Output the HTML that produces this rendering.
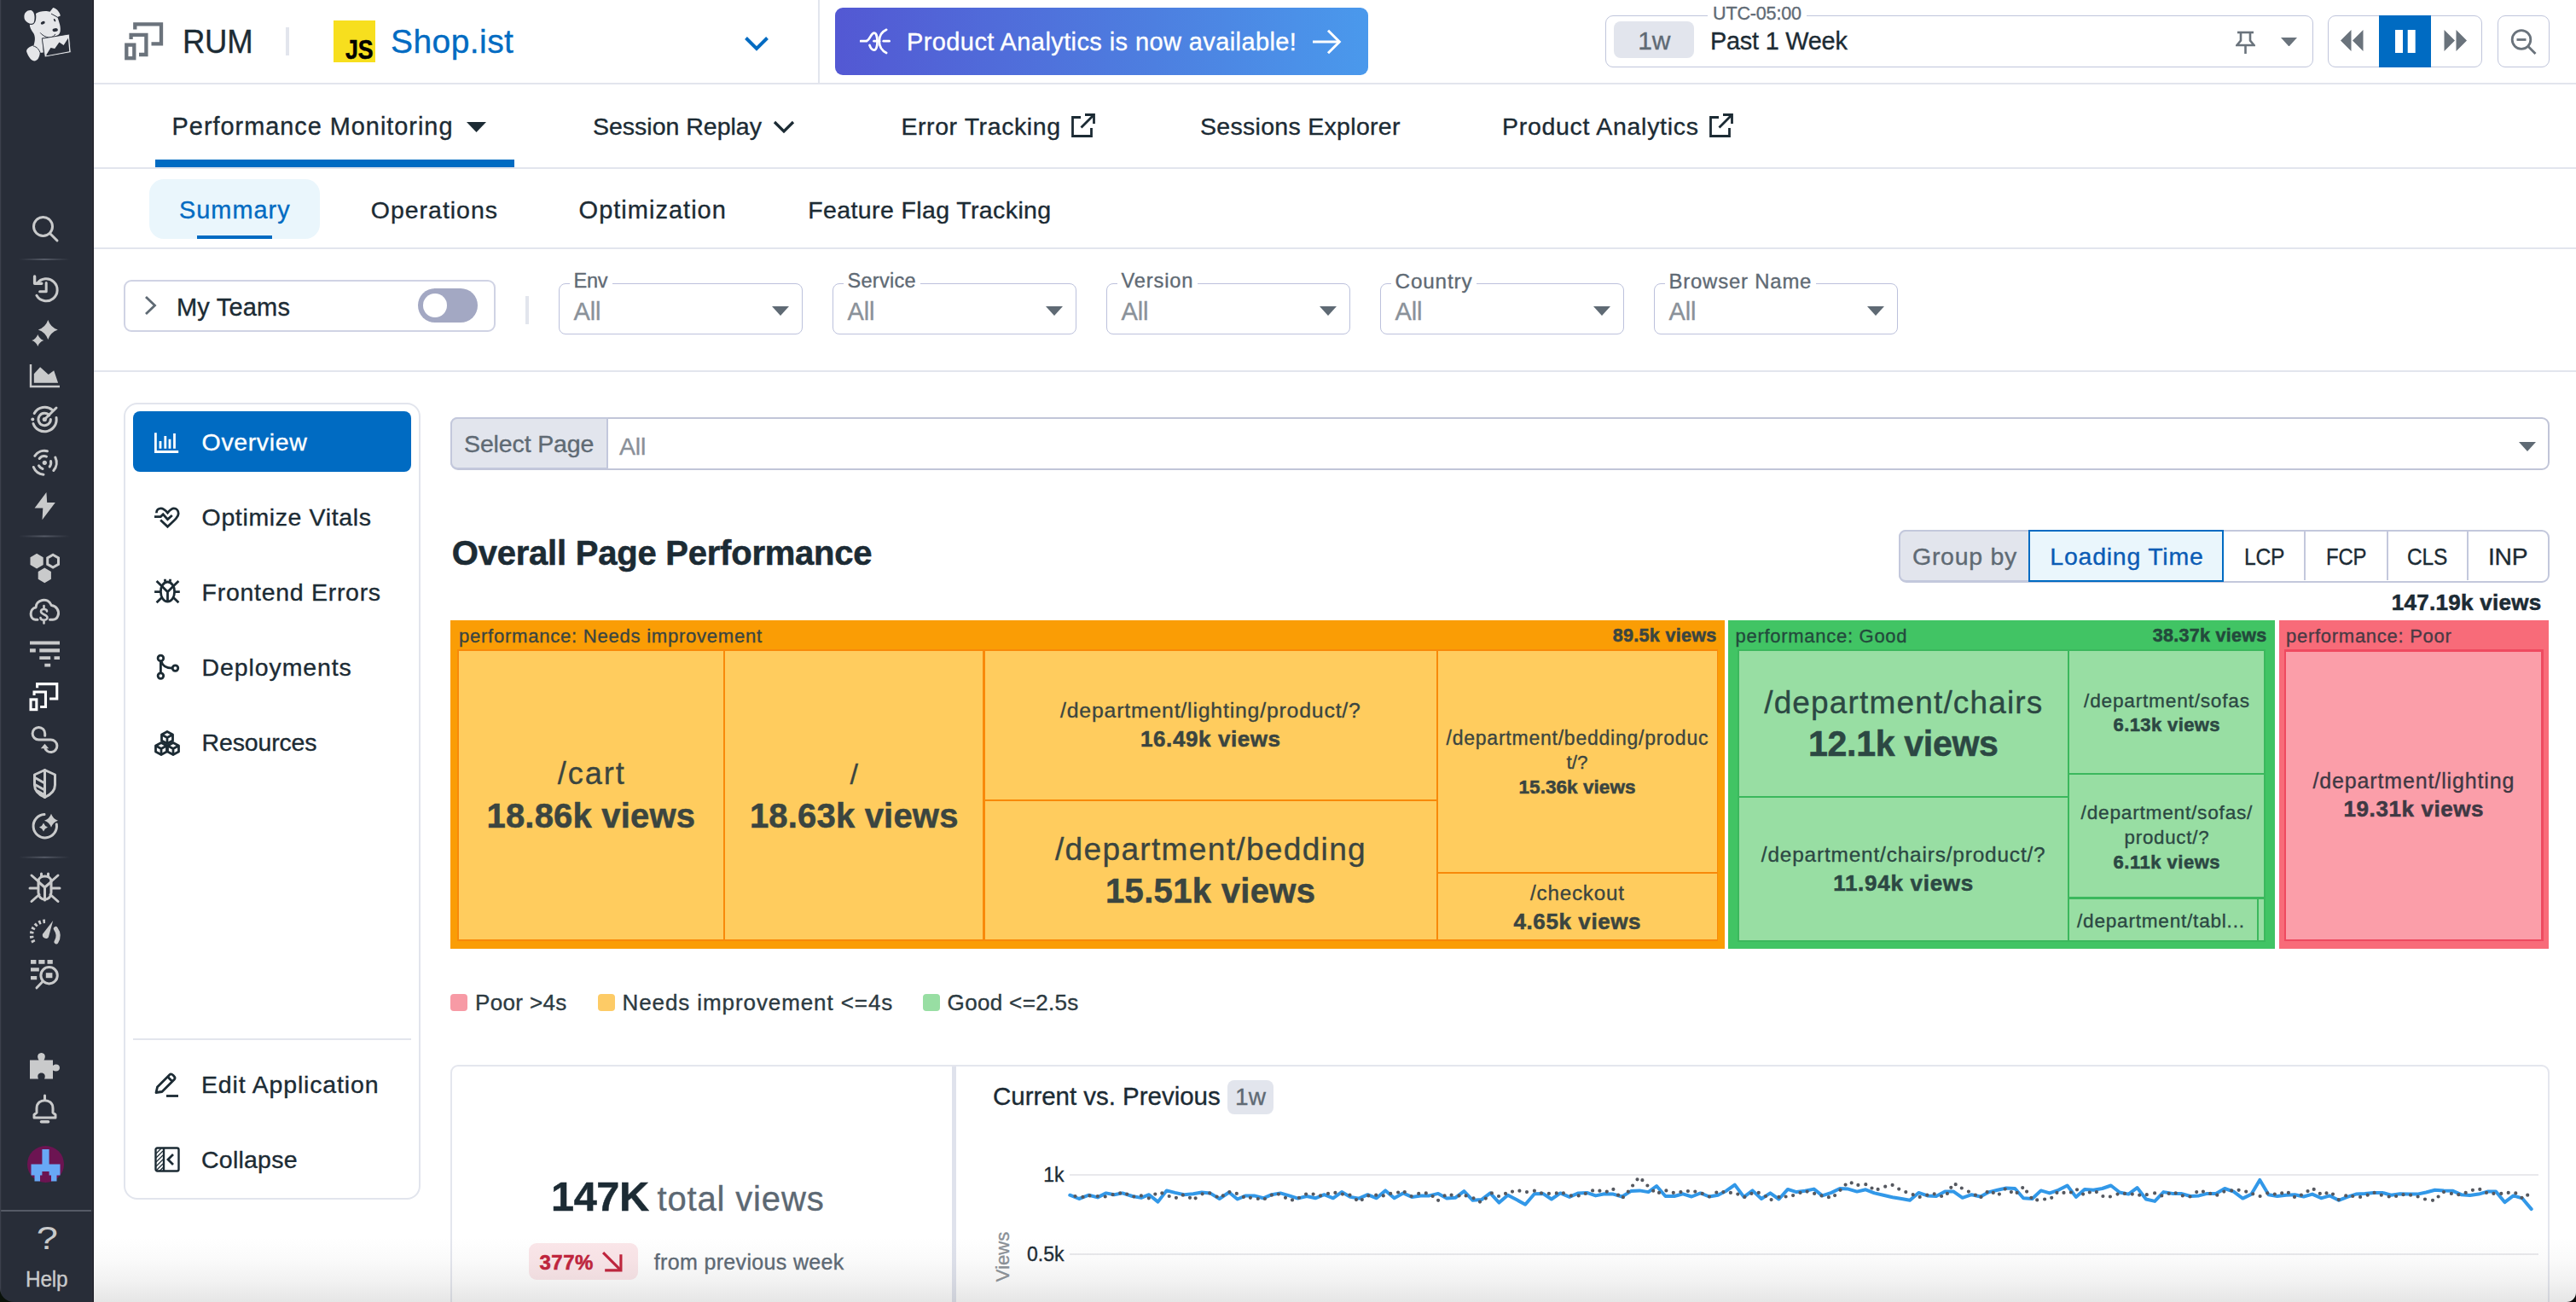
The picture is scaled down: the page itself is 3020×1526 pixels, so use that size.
<!DOCTYPE html>
<html lang="en">
<head>
<meta charset="utf-8">
<title>RUM - Shop.ist - Performance Monitoring</title>
<style>
*{box-sizing:border-box;margin:0;padding:0}
html,body{width:3020px;height:1526px;overflow:hidden;background:#fff}
body{position:relative;font-family:"Liberation Sans",sans-serif;color:#1c2b34;-webkit-font-smoothing:antialiased;-webkit-text-stroke:0.35px currentColor}
b,strong,h2,[style*="font-weight:700"]{-webkit-text-stroke:0.55px currentColor}
.abs{position:absolute}
.hl{position:absolute;height:2px;background:#e2e5ed}
.vl{position:absolute;width:2px;background:#e2e5ed}
nav.side{position:absolute;left:0;top:0;width:110px;height:1526px;background:#282d38}
nav.side svg{position:absolute;overflow:visible}
.sel{position:absolute;border:1.900px solid #bcc1dc;border-radius:8px;background:#fff}
svg{display:block}
</style>
</head>
<body>
<nav class="side"><svg style="left:0;top:0" width="110" height="1526" viewBox="0 0 110 1526"><defs><linearGradient id="dvg" x1="0" x2="1" y1="0" y2="0"><stop offset="0" stop-color="#4e535f" stop-opacity="0"/><stop offset="0.5" stop-color="#565b67"/><stop offset="1" stop-color="#4e535f" stop-opacity="0"/></linearGradient></defs><g transform="translate(10 0) scale(0.06143)"><path fill="#e5e6e9" d="M300 330C290 230 380 180 440 200C500 230 512 350 482 430C450 470 380 450 340 410C310 380 300 360 300 330Z"/><path fill="#e5e6e9" d="M520 262C580 212 720 198 790 225L850 145C930 160 985 250 990 300L935 325C965 420 1005 520 985 610C970 665 920 690 880 690C850 715 810 735 770 730L640 725L665 1000L600 1010C590 1090 560 1160 490 1165C420 1150 380 1080 345 990C330 940 400 880 480 870C500 800 520 720 480 640C430 570 400 520 405 470C460 485 505 450 518 390C528 340 528 300 520 262Z"/><path fill="none" stroke="#282d38" stroke-width="16" stroke-linecap="round" d="M480 880C540 890 590 950 610 1020M610 630C660 690 740 720 800 715C840 705 870 690 890 655M820 265C860 285 900 310 935 330"/><ellipse cx="655" cy="435" rx="42" ry="28" transform="rotate(-22 655 435)" fill="#282d38"/><ellipse cx="880" cy="385" rx="16" ry="30" transform="rotate(-28 880 385)" fill="#282d38"/><ellipse cx="890" cy="572" rx="52" ry="32" transform="rotate(-8 890 572)" fill="#282d38"/><path fill="#e5e6e9" stroke="#282d38" stroke-width="14" d="M640 735L1160 650L1192 1002L690 1092Z"/><path fill="#282d38" d="M722 1045L805 912L882 928L968 805L1052 862L1138 728L1160 982L725 1062Z"/></g><g fill="none" stroke="#c9cacb" stroke-width="3" stroke-linecap="round" stroke-linejoin="round"><circle cx="50.500" cy="265.500" r="11"/><path d="M58.500 273.500L67 282"/></g><rect x="22" y="303" width="60" height="2" fill="url(#dvg)"/><g fill="none" stroke="#c9cacb" stroke-width="3" stroke-linecap="round" stroke-linejoin="round" stroke-linecap="butt" stroke-linejoin="miter"><path d="M43.500 332.300A13 13 0 1 1 42.900 346.300"/><path d="M54.200 331.500V341.700H46.600"/><path d="M40.600 324V332.200H48.800" stroke-width="3.400"/></g><path fill="#c9cacb" d="M56.3 375.0Q59.2095 383.5905 67.8 386.5Q59.2095 389.4095 56.3 398.0Q53.390499999999996 389.4095 44.8 386.5Q53.390499999999996 383.5905 56.3 375.0ZM44.3 392Q46.071 397.229 51.3 399Q46.071 400.771 44.3 406Q42.528999999999996 400.771 37.3 399Q42.528999999999996 397.229 44.3 392Z"/><path d="M36 427V453H70" fill="none" stroke="#c9cacb" stroke-width="2.400"/><path fill="#c9cacb" d="M39.800 448.700V438.200L47.100 430.200L56.800 439L63.200 434.200L68.100 448.700Z"/><g fill="none" stroke="#c9cacb" stroke-width="3" stroke-linecap="round" stroke-linejoin="round"><path d="M61.500 480.600A14 14 0 0 0 40.200 484.500"/><path d="M39 496.500A14 14 0 0 0 66 489.500"/><path d="M57.700 486.800A7.200 7.200 0 1 0 59.400 491.500"/><path d="M52.300 491.500L66 478"/></g><circle cx="38.300" cy="491.500" r="2" fill="#c9cacb"/><circle cx="52.300" cy="491.500" r="2.600" fill="#c9cacb"/><g fill="none" stroke="#c9cacb" stroke-width="3" stroke-linecap="round" stroke-linejoin="round"><path d="M40.800 534.300A14 14 0 0 1 55.500 528.700"/><path d="M64.800 536A14 14 0 0 1 62.800 551.500"/><path d="M39.300 547.500A14 14 0 0 0 51 556.200"/><path d="M46.200 537.500A7.500 7.500 0 0 1 54.500 535.100"/><path d="M59.500 540.500A7.500 7.500 0 0 1 58.200 547"/><path d="M45.500 545.800A7.500 7.500 0 0 0 50 549.500"/></g><circle cx="52.300" cy="542.300" r="2.600" fill="#c9cacb"/><path fill="#c9cacb" d="M54.400 576.900L40.600 595.500H50.300L49.500 609.200L64.800 589H55.200Z"/><rect x="22" y="627.5" width="60" height="2" fill="url(#dvg)"/><path fill="#c9cacb" d="M43.1 648.8L50.7 653.2L50.7 662.0L43.1 666.4L35.5 662.0L35.5 653.2ZM52.3 665.6L59.9 670.0L59.9 678.8L52.3 683.2L44.7 678.8L44.7 670.0Z"/><path fill="none" stroke="#c9cacb" stroke-width="3" d="M62.1 650.2L68.5 653.9L68.5 661.3L62.1 665.0L55.7 661.3L55.7 653.9Z"/><g fill="none" stroke="#c9cacb" stroke-width="3" stroke-linecap="round" stroke-linejoin="round" stroke-width="2.800"><path d="M44 726.200H41.500C34 725.500 34.500 713 42 712C42 703 56 699 60.300 709.500C66 710 70 716 68 721.500C67 724.500 65 726.200 62 726.200H58.500"/><path d="M55 716.500C55 713.300 48 713 48 716.800C48 720.400 55.500 720 55.500 723.800C55.500 727.800 47.500 727.500 47.500 724M51.500 710V713.500M51.500 727V730.500" stroke-width="2.600"/></g><path fill="#c9cacb" d="M35 751.500H70V755.500H35ZM35 760.300H41.800V764.400H35ZM46.300 760.300H70V764.400H46.300ZM46.300 769.200H59.200V773H46.300ZM63.500 769.200H70V773H63.500ZM52.300 777.700H59.200V781.600H52.300Z"/><g transform="translate(34.3 799.8) scale(0.755)" fill="none" stroke="#fff" stroke-width="4.1"><path d="M12.300 8.500V2.400H43V25.400H31.500"/><path d="M7.600 20V14.900H25.400V38H17"/><rect x="2.300" y="26.600" width="9" height="15.600"/></g><g fill="none" stroke="#c9cacb" stroke-width="3" stroke-linecap="round" stroke-linejoin="round" stroke-linecap="butt"><path d="M52.700 862.300V859.700A7.300 7.300 0 1 0 45.400 867H59.600A7.300 7.300 0 1 1 52.400 875.500"/></g><path fill="#c9cacb" d="M47.800 877.200L52.500 871.800L57.200 877.200Z"/><g fill="none" stroke="#c9cacb" stroke-width="3" stroke-linecap="round" stroke-linejoin="round" stroke-width="2.800" stroke-linecap="butt"><path d="M52.500 902.500L64.500 908V920C64.500 927 58 932 52.500 934.500C47 932 40.500 927 40.500 920V908Z"/><path d="M52.500 902.500V934.500"/><path d="M41 911.500L52.500 918M41 919.500L52.500 926M44 927L52 931.500"/></g><g fill="none" stroke="#c9cacb" stroke-width="3" stroke-linecap="round" stroke-linejoin="round"><path d="M52 954.500A13.700 13.700 0 1 0 66.300 966"/></g><path fill="#c9cacb" d="M60 953.8Q62.024 959.776 68 961.8Q62.024 963.824 60 969.8Q57.976 963.824 52 961.8Q57.976 959.776 60 953.8ZM51 964.5Q52.265 968.235 56 969.5Q52.265 970.765 51 974.5Q49.735 970.765 46 969.5Q49.735 968.235 51 964.5Z"/><rect x="22" y="1003.8" width="60" height="2" fill="url(#dvg)"/><g fill="none" stroke="#c9cacb" stroke-width="3" stroke-linecap="round" stroke-linejoin="round" stroke-linecap="butt"><path d="M45 1033C45 1025 60 1025 60 1033V1046C60 1057 45 1057 45 1046Z"/><path d="M52.500 1040V1055M45.500 1034L52.500 1040L59.500 1034"/><path d="M35 1041H44.500M60.500 1041H70M37 1026L45.500 1033.500M68 1026L59.500 1033.500M37 1056.500L46 1048.500M68 1056.500L59 1048.500M48.500 1024V1027.500M56.500 1024V1027.500"/></g><g fill="none" stroke="#c9cacb"><path d="M39.500 1104.300A16 16 0 0 1 53 1079.800" stroke-width="4.400" stroke-dasharray="2.700 2.500"/><path d="M65.300 1088.500C68.800 1093.500 69 1099 66 1103.800" stroke-width="5" stroke-linecap="round"/></g><path fill="#c9cacb" d="M62.200 1079L57 1098C55.500 1102 48.500 1099.500 50 1094.800Z"/><path fill="#c9cacb" d="M36 1125H42.400V1129.700H36ZM45.300 1125H52.500V1129.700H45.300ZM55.500 1125H61.800V1129.700H55.500ZM36 1134.300H45.800V1138.400H36ZM36 1144H43.200V1148.300H36Z"/><g fill="none" stroke="#c9cacb" stroke-width="3" stroke-linecap="round" stroke-linejoin="round" stroke-width="4.200"><circle cx="57.600" cy="1143.200" r="9.700"/><path d="M49.500 1151L43 1157.800"/></g><rect x="53.800" y="1140.200" width="7.600" height="6" fill="#c9cacb"/><path fill="#c9cacb" d="M35 1242.500H45.500C42.500 1237.500 45 1234 48.500 1234C52 1234 54.500 1237.500 51.500 1242.500H62V1249C66 1246 70 1248 70 1251.500C70 1255 66 1257 62 1254.500V1264.500H52C54 1260 51.500 1257.500 48.500 1257.500C45.500 1257.500 43 1260 45 1264.500H35Z"/><g transform="translate(0 3)"><g fill="none" stroke="#c9cacb" stroke-width="3" stroke-linecap="round" stroke-linejoin="round" stroke-linecap="butt"><path d="M40 1307V1303.500L43 1301V1296C43 1283.500 62 1283.500 62 1296V1301L65 1303.500V1307Z"/><path d="M52.500 1281V1286"/></g><path d="M48.500 1311.800H56.500" stroke="#c9cacb" stroke-width="3.600" stroke-linecap="round"/></g><circle cx="53.500" cy="1364.500" r="21.500" fill="#6c1452"/><path fill="#68a8f6" d="M49.400 1347H57.600V1364.500H70.500V1377.500H66.500V1384.500H60V1377.500H57.600V1373H49.400V1377.500H47V1384.500H40.500V1377.500H36.500V1364.500H49.400Z"/><rect x="0" y="1418" width="110" height="2" fill="#555a66"/><rect x="0" y="0" width="1.200" height="1526" fill="#3c404c"/><rect x="107" y="0" width="1.700" height="1526" fill="#2d303b"/><rect x="108.700" y="0" width="1.300" height="1526" fill="#1f2029"/></svg><span style="position:absolute;white-space:nowrap;left:44.7px;top:1428.4px;font-size:37px;line-height:48px;color:#c9cacb;transform:scaleX(1.22);-webkit-text-stroke:0;">?</span><span style="position:absolute;white-space:nowrap;left:30.2px;top:1483.3px;font-size:25px;line-height:32px;color:#c9cacb;letter-spacing:-0.20px;transform:scaleX(0.9749);transform-origin:0 50%;">Help</span></nav>
<header><svg class="abs" style="left:146px;top:26px" width="46" height="45" viewBox="0 0 46 45" fill="none" stroke="#6b737c" stroke-width="4.300"><path d="M12.3 8.5V2.4H43V25.4H31.5"/><path d="M7.6 20V14.9H25.4V38H17"/><rect x="2.3" y="26.6" width="9" height="15.6"/></svg>
<span style="position:absolute;white-space:nowrap;left:214.0px;top:23.4px;font-size:39px;line-height:51px;color:#1c2b34;letter-spacing:-0.31px;transform:scaleX(0.9364);transform-origin:0 50%;">RUM</span>
<div style="position:absolute;left:335px;top:32px;width:4px;height:33px;background:#e2e5ed"></div>
<div style="position:absolute;left:391px;top:24px;width:49px;height:49px;background:#f7df1e"><span style="position:absolute;white-space:nowrap;left:13.5px;top:14.9px;font-size:31px;line-height:40px;color:#000;font-weight:700;letter-spacing:-0.25px;transform:scaleX(0.8615);transform-origin:0 50%;">JS</span></div>
<span style="position:absolute;white-space:nowrap;left:458.0px;top:23.4px;font-size:39px;line-height:51px;color:#006bc2;letter-spacing:0.43px;">Shop.ist</span>
<svg class="abs" style="left:872px;top:42px" width="30" height="18" viewBox="0 0 30 18" fill="none" stroke="#006bc2" stroke-width="4"><path d="M2.5 2.5L15 15L27.5 2.5"/></svg>
<div style="position:absolute;left:979px;top:9px;width:625px;height:79px;border-radius:9px;background:linear-gradient(90deg,#5358d3 0%,#4d7fe0 60%,#4a99ec 100%)"><svg class="abs" style="left:29px;top:24px" width="36" height="32" viewBox="0 0 36 32" fill="none" stroke="#fff" stroke-width="2.700" stroke-linecap="round"><path d="M0.800 15.200H7C12 15.200 12.500 5.600 17 5.600C21.500 5.600 22 25.600 16.800 25.600C14 25.600 12.500 23 11.500 20"/><path d="M16.500 15.200H23"/><path d="M31.200 1.800C20 7 20 23.500 31.200 29"/><path d="M27.700 15.200H34.600"/></svg><span style="position:absolute;white-space:nowrap;left:84.0px;top:20.8px;font-size:29px;line-height:38px;color:#fff;letter-spacing:0.40px;">Product Analytics is now available!</span><svg class="abs" style="left:559.500px;top:25.750px" width="34" height="28" viewBox="0 0 34 28" overflow="visible" fill="none" stroke="#fff" stroke-width="3"><path d="M0 14H31"/><path d="M18 0.700L31.300 14L18 27.300"/></svg></div>
<div style="position:absolute;left:1882px;top:18px;width:830px;height:61px;border:1.800px solid #c0c5db;border-radius:9px"><div style="position:absolute;left:9.4px;top:6.4px;width:94.0px;height:43.0px;background:#e2e5ed;border-radius:8px"><span style="position:absolute;white-space:nowrap;left:27.8px;top:2.8px;font-size:30px;line-height:39px;color:#5f6a74;">1w</span></div><span style="position:absolute;white-space:nowrap;left:122.4px;top:8.8px;font-size:30px;line-height:39px;color:#1c2b34;letter-spacing:-0.24px;transform:scaleX(0.9626);transform-origin:0 50%;">Past 1 Week</span><svg class="abs" style="left:738px;top:17px" width="23" height="27" viewBox="0 0 23 27" fill="none" stroke="#6a737c" stroke-width="2.600"><path d="M2 2H21"/><path d="M6 2V11.500L1.500 17H21.500L17 11.500V2"/><path d="M11.500 17V27"/></svg><svg class="abs" style="left:790.500px;top:24.500px" width="19" height="10.500" viewBox="0 0 19 10.500"><path d="M0 0H19L9.500 10.500Z" fill="#6a737c"/></svg></div>
<div style="position:absolute;left:2002px;top:5px;width:116px;height:25px;background:#fff"><span style="position:absolute;white-space:nowrap;left:6.0px;top:-3.7px;font-size:22.5px;line-height:29px;color:#5f6a74;letter-spacing:-0.18px;transform:scaleX(0.9578);transform-origin:0 50%;">UTC-05:00</span></div>
<div style="position:absolute;left:2729px;top:18px;width:181px;height:61px;border:1.800px solid #c0c5db;border-radius:9px"><svg class="abs" style="left:14px;top:16px" width="27" height="25" viewBox="0 0 27 25"><path d="M12.500 0V25L0 12.500ZM26.500 0V25L14 12.500Z" fill="#6a737c"/></svg><svg class="abs" style="left:135px;top:16px" width="27" height="25" viewBox="0 0 27 25"><path d="M0.500 0V25L13 12.500ZM14.500 0V25L27 12.500Z" fill="#6a737c"/></svg></div>
<div style="position:absolute;left:2789px;top:18px;width:61px;height:61px;background:#006bc2"><svg class="abs" style="left:18.800px;top:16.700px" width="24" height="27.200" viewBox="0 0 24 27.200"><path d="M0 0H9V27.200H0ZM14.700 0H23.700V27.200H14.700Z" fill="#fff"/></svg></div>
<div style="position:absolute;left:2927.5px;top:18px;width:61.5px;height:61px;border:1.800px solid #c0c5db;border-radius:9px"><svg class="abs" style="left:14px;top:13.500px" width="32" height="32" viewBox="0 0 32 32" fill="none" stroke="#6a737c" stroke-width="2.800"><circle cx="13" cy="13.500" r="10.800"/><path d="M21 21.500L29.500 30"/><path d="M7.500 13.500H18.500"/></svg></div></header>
<nav class="tabs"><span style="position:absolute;white-space:nowrap;left:201.6px;top:129.3px;font-size:28.9px;line-height:38px;color:#1c2b34;letter-spacing:0.98px;">Performance Monitoring</span>
<svg class="abs" style="left:547px;top:143px" width="23" height="12" viewBox="0 0 23 12"><path d="M0 0H23L11.500 12Z" fill="#1c2b34"/></svg>
<div style="position:absolute;left:182px;top:187.2px;width:421px;height:8.800000000000011px;background:#006bc2"></div>
<span style="position:absolute;white-space:nowrap;left:695.0px;top:129.8px;font-size:28.5px;line-height:37px;color:#1c2b34;letter-spacing:-0.01px;">Session Replay</span>
<svg class="abs" style="left:906px;top:141px" width="26" height="16" viewBox="0 0 26 16" fill="none" stroke="#1c2b34" stroke-width="3.2"><path d="M2 2L13 13L24 2"/></svg>
<span style="position:absolute;white-space:nowrap;left:1056.4px;top:129.8px;font-size:28.5px;line-height:37px;color:#1c2b34;letter-spacing:0.59px;">Error Tracking</span>
<svg class="abs" style="left:1255px;top:132px" width="30" height="30" viewBox="0 0 30 30" fill="none" stroke="#1c2b34" stroke-width="2.800" stroke-linecap="butt" stroke-linejoin="miter"><path d="M12 5.500H2.500V27.500H24.500V18"/><path d="M17 2.500H27.500V13"/><path d="M27 3L12.500 17.500"/></svg>
<span style="position:absolute;white-space:nowrap;left:1407.0px;top:129.8px;font-size:28.5px;line-height:37px;color:#1c2b34;letter-spacing:0.30px;">Sessions Explorer</span>
<span style="position:absolute;white-space:nowrap;left:1761.0px;top:129.8px;font-size:28.5px;line-height:37px;color:#1c2b34;letter-spacing:0.71px;">Product Analytics</span>
<svg class="abs" style="left:2003px;top:132px" width="30" height="30" viewBox="0 0 30 30" fill="none" stroke="#1c2b34" stroke-width="2.800" stroke-linecap="butt" stroke-linejoin="miter"><path d="M12 5.500H2.500V27.500H24.500V18"/><path d="M17 2.500H27.500V13"/><path d="M27 3L12.500 17.500"/></svg>
<div style="position:absolute;left:175.2px;top:210.3px;width:199.8px;height:69.69999999999999px;background:#eaf6fc;border-radius:17px"></div>
<span style="position:absolute;white-space:nowrap;left:210.0px;top:227.1px;font-size:28.9px;line-height:38px;color:#006bc2;letter-spacing:1.00px;">Summary</span>
<div style="position:absolute;left:231px;top:276px;width:88px;height:4px;background:#006bc2"></div>
<span style="position:absolute;white-space:nowrap;left:434.8px;top:227.6px;font-size:28.5px;line-height:37px;color:#1c2b34;letter-spacing:0.98px;">Operations</span>
<span style="position:absolute;white-space:nowrap;left:678.6px;top:227.1px;font-size:29.0px;line-height:38px;color:#1c2b34;letter-spacing:1.01px;">Optimization</span>
<span style="position:absolute;white-space:nowrap;left:947.2px;top:227.6px;font-size:28.5px;line-height:37px;color:#1c2b34;letter-spacing:0.39px;">Feature Flag Tracking</span></nav>
<section class="filters"><div style="position:absolute;left:145px;top:328px;width:436px;height:61px;border:2px solid #d0d3e4;border-radius:9px"><svg class="abs" style="left:21px;top:16px" width="18" height="24" viewBox="0 0 18 24" fill="none" stroke="#5f6a74" stroke-width="2.800"><path d="M3 2L13.500 12L3 22"/></svg><span style="position:absolute;white-space:nowrap;left:60.0px;top:10.6px;font-size:29px;line-height:38px;color:#1c2b34;letter-spacing:0.19px;">My Teams</span><div style="position:absolute;left:343px;top:8px;width:70px;height:40px;background:#a3a8c3;border-radius:20px"><div style="position:absolute;left:6px;top:6px;width:28px;height:28px;background:#fff;border-radius:50%"></div></div></div>
<div style="position:absolute;left:616px;top:347px;width:4px;height:33px;background:#e2e5ed"></div>
<div class="sel" style="position:absolute;left:655.2px;top:332px;width:285.69999999999993px;height:60px;"></div><div style="position:absolute;left:667.5px;top:318px;width:50.0px;height:27px;background:#fff"><span style="position:absolute;white-space:nowrap;left:5.0px;top:-3.6px;font-size:23.5px;line-height:31px;color:#5f6a74;letter-spacing:-0.27px;">Env</span></div><span style="position:absolute;white-space:nowrap;left:672.5px;top:346.3px;font-size:29px;line-height:38px;color:#8a9199;letter-spacing:-0.09px;">All</span><svg class="abs" style="left:904.5px;top:359px" width="20" height="11" viewBox="0 0 20 11"><path d="M0 0H20L10.0 11Z" fill="#5f6a74"/></svg>
<div class="sel" style="position:absolute;left:976.2px;top:332px;width:285.70000000000005px;height:60px;"></div><div style="position:absolute;left:988.5px;top:318px;width:90.0px;height:27px;background:#fff"><span style="position:absolute;white-space:nowrap;left:5.0px;top:-3.6px;font-size:23.5px;line-height:31px;color:#5f6a74;letter-spacing:0.27px;">Service</span></div><span style="position:absolute;white-space:nowrap;left:993.5px;top:346.3px;font-size:29px;line-height:38px;color:#8a9199;letter-spacing:-0.09px;">All</span><svg class="abs" style="left:1225.5px;top:359px" width="20" height="11" viewBox="0 0 20 11"><path d="M0 0H20L10.0 11Z" fill="#5f6a74"/></svg>
<div class="sel" style="position:absolute;left:1297.2px;top:332px;width:285.70000000000005px;height:60px;"></div><div style="position:absolute;left:1309.5px;top:318px;width:94.0px;height:27px;background:#fff"><span style="position:absolute;white-space:nowrap;left:5.0px;top:-3.6px;font-size:23.7px;line-height:31px;color:#5f6a74;letter-spacing:0.83px;">Version</span></div><span style="position:absolute;white-space:nowrap;left:1314.5px;top:346.3px;font-size:29px;line-height:38px;color:#8a9199;letter-spacing:-0.09px;">All</span><svg class="abs" style="left:1546.5px;top:359px" width="20" height="11" viewBox="0 0 20 11"><path d="M0 0H20L10.0 11Z" fill="#5f6a74"/></svg>
<div class="sel" style="position:absolute;left:1618.2px;top:332px;width:285.70000000000005px;height:60px;"></div><div style="position:absolute;left:1630.5px;top:318px;width:100.0px;height:27px;background:#fff"><span style="position:absolute;white-space:nowrap;left:5.0px;top:-4.1px;font-size:24.3px;line-height:32px;color:#5f6a74;letter-spacing:0.83px;">Country</span></div><span style="position:absolute;white-space:nowrap;left:1635.5px;top:346.3px;font-size:29px;line-height:38px;color:#8a9199;letter-spacing:-0.09px;">All</span><svg class="abs" style="left:1867.5px;top:359px" width="20" height="11" viewBox="0 0 20 11"><path d="M0 0H20L10.0 11Z" fill="#5f6a74"/></svg>
<div class="sel" style="position:absolute;left:1939.2px;top:332px;width:285.70000000000005px;height:60px;"></div><div style="position:absolute;left:1951.5px;top:318px;width:177.0px;height:27px;background:#fff"><span style="position:absolute;white-space:nowrap;left:5.0px;top:-3.6px;font-size:23.9px;line-height:31px;color:#5f6a74;letter-spacing:0.81px;">Browser Name</span></div><span style="position:absolute;white-space:nowrap;left:1956.5px;top:346.3px;font-size:29px;line-height:38px;color:#8a9199;letter-spacing:-0.09px;">All</span><svg class="abs" style="left:2188.5px;top:359px" width="20" height="11" viewBox="0 0 20 11"><path d="M0 0H20L10.0 11Z" fill="#5f6a74"/></svg></section>
<div class="hl" style="left:110px;top:97px;width:2910px"></div>
<div class="hl" style="left:110px;top:196px;width:2910px"></div>
<div class="hl" style="left:110px;top:290px;width:2910px"></div>
<div class="hl" style="left:110px;top:434px;width:2910px"></div>
<div class="vl" style="left:959px;top:0;height:97px"></div>
<aside class="leftnav"><div style="position:absolute;left:145px;top:472px;width:348px;height:934px;border:2px solid #e2e5ed;border-radius:16px;background:#fff"></div>
<div style="position:absolute;left:156px;top:482px;width:326px;height:71px;background:#006bc2;border-radius:8px"></div>
<svg class="abs" style="left:181px;top:504px" width="30" height="30" viewBox="0 0 30 30" overflow="visible" fill="none" stroke="#fff" stroke-width="2.8" stroke-linejoin="round"><path d="M1.400 3.300V25.500H28.200" stroke-width="2.800" stroke-linejoin="miter"/><path d="M7 21.800V12.900M12.800 21.800V7M18 21.800V10.700M23.500 21.800V4" stroke-width="2.800"/></svg>
<span style="position:absolute;white-space:nowrap;left:236.6px;top:500.0px;font-size:28.5px;line-height:37px;color:#fff;letter-spacing:0.62px;">Overview</span>
<svg class="abs" style="left:181px;top:592px" width="30" height="30" viewBox="0 0 30 30" overflow="visible" fill="none" stroke="#1c2b34" stroke-width="2.8" stroke-linejoin="round"><path d="M2.400 9.200C2.400 5.500 5 3.900 7.600 3.900C10.500 3.900 13 6 15.500 9C18 6 20 3.900 22.800 3.900C26 3.900 28.200 6.500 28.200 10.100C28.200 13.500 25 16.500 15.500 25.300L7.200 17.400" stroke-linejoin="miter"/><path d="M0 13.600H7.400L10.200 10.800L15.500 16.800L20.800 12" stroke-linejoin="miter"/></svg>
<span style="position:absolute;white-space:nowrap;left:236.6px;top:587.9px;font-size:28.5px;line-height:37px;color:#1c2b34;letter-spacing:0.63px;">Optimize Vitals</span>
<svg class="abs" style="left:181px;top:680px" width="30" height="30" viewBox="0 0 30 30" overflow="visible" fill="none" stroke="#1c2b34" stroke-width="2.8" stroke-linejoin="round"><ellipse cx="15.500" cy="13.600" rx="8.100" ry="11.600"/><path d="M9.300 7.600L15.500 13.800L21.700 7.600M15.500 13.800V24.600"/><path d="M0.100 13.600H7.400M23.800 13.600H29.800M2.600 0.900L8.800 7M28.400 0.900L22.200 7M2.600 26.200L8.800 20.200M28.400 26.200L22.200 20.200M12.500 -1.200V1.800M18.500 -1.200V1.800"/></svg>
<span style="position:absolute;white-space:nowrap;left:236.6px;top:675.8px;font-size:28.5px;line-height:37px;color:#1c2b34;letter-spacing:0.71px;">Frontend Errors</span>
<svg class="abs" style="left:181px;top:768px" width="30" height="30" viewBox="0 0 30 30" overflow="visible" fill="none" stroke="#1c2b34" stroke-width="2.8" stroke-linejoin="round"><circle cx="7.400" cy="3.400" r="3.300"/><circle cx="7.400" cy="24.100" r="3.300"/><circle cx="24.500" cy="15.100" r="3.300"/><path d="M7.400 6.700V20.800M8 6.700C9 11 13 15.100 21.200 15.100"/></svg>
<span style="position:absolute;white-space:nowrap;left:236.6px;top:763.7px;font-size:28.5px;line-height:37px;color:#1c2b34;letter-spacing:0.89px;">Deployments</span>
<svg class="abs" style="left:181px;top:856px" width="30" height="30" viewBox="0 0 30 30" overflow="visible" fill="none" stroke="#1c2b34" stroke-width="2.8" stroke-linejoin="round"><path d="M15 1.500L21.500 5V12L15 15.500L8.500 12V5Z"/><path d="M8.500 5L15 8.500L21.500 5M15 8.500V15.500"/><path d="M8 14.500L14.500 18V25L8 28.500L1.500 25V18Z"/><path d="M1.500 18L8 21.500L14.500 18M8 21.500V28.500"/><path d="M22 14.500L28.500 18V25L22 28.500L15.500 25V18Z"/><path d="M15.500 18L22 21.500L28.500 18M22 21.500V28.500"/></svg>
<span style="position:absolute;white-space:nowrap;left:236.6px;top:851.6px;font-size:28.5px;line-height:37px;color:#1c2b34;letter-spacing:-0.17px;">Resources</span>
<div style="position:absolute;left:156px;top:1216.5px;width:326px;height:2.0px;background:#e2e5ed"></div>
<svg class="abs" style="left:181px;top:1257px" width="30" height="30" viewBox="0 0 30 30" overflow="visible" fill="none" stroke="#1c2b34" stroke-width="2.8" stroke-linejoin="round"><path d="M2 23.500L3.500 17L18 2.500C20 0.500 25.500 5.500 23.500 8L9 22.500Z"/><path d="M15.500 5L21 10.500"/><path d="M14 27.500H28"/></svg>
<span style="position:absolute;white-space:nowrap;left:236.0px;top:1253.1px;font-size:28.5px;line-height:37px;color:#1c2b34;letter-spacing:0.84px;">Edit Application</span>
<svg class="abs" style="left:181px;top:1344px" width="30" height="30" viewBox="0 0 30 30" overflow="visible" fill="none" stroke="#1c2b34" stroke-width="2.8" stroke-linejoin="round"><rect x="1.500" y="1.500" width="27" height="27" rx="2" stroke-width="2.400"/><path d="M11 1.500V28.500" stroke-width="2.400"/><path d="M22 9L16 15L22 21" stroke-width="2.800" stroke-linejoin="miter"/><path d="M2 8L8 2M2 13L10 5M2 18L10 10M2 23L10 15M2 28L10 20M6 28.500L10 24.500" stroke-width="1.200"/></svg>
<span style="position:absolute;white-space:nowrap;left:236.0px;top:1341.1px;font-size:28.5px;line-height:37px;color:#1c2b34;letter-spacing:0.23px;">Collapse</span></aside>
<main><div style="position:absolute;left:528px;top:489px;width:2461px;height:62px;border:2px solid #c1c5d8;border-radius:9px"><div style="position:absolute;left:-2px;top:-2px;width:185px;height:61px;background:#e2e5ed;border:2px solid #c3c8dc;border-radius:8px 0 0 8px"><span style="position:absolute;white-space:nowrap;left:14.0px;top:11.3px;font-size:28.5px;line-height:37px;color:#5f6a74;letter-spacing:-0.13px;">Select Page</span></div><span style="position:absolute;white-space:nowrap;left:196.0px;top:13.8px;font-size:28.5px;line-height:37px;color:#8a9099;letter-spacing:-0.22px;">All</span><svg class="abs" style="left:2423px;top:27px" width="20" height="11" viewBox="0 0 20 11"><path d="M0 0H20L10.0 11Z" fill="#5f6a74"/></svg></div>
<h2 style="position:absolute;white-space:nowrap;left:529.8px;top:622.3px;font-size:40px;line-height:52px;color:#1c2b34;font-weight:700;letter-spacing:-0.23px;">Overall Page Performance</h2>
<div style="position:absolute;left:2226px;top:621px;width:763px;height:62px;border:2px solid #c3c8dc;border-radius:9px"><div style="position:absolute;left:-2px;top:-2px;width:154px;height:61px;background:#e2e5ed;border:2px solid #c3c8dc;border-radius:8px 0 0 8px"><span style="position:absolute;white-space:nowrap;left:14.0px;top:11.3px;font-size:28.5px;line-height:37px;color:#5f6a74;letter-spacing:0.72px;">Group by</span></div><div style="position:absolute;left:150.3px;top:-2px;width:229.2px;height:61px;background:#eaf6fc;border:2.5px solid #006bc2"><span style="position:absolute;white-space:nowrap;left:23.0px;top:11.3px;font-size:28.5px;line-height:37px;color:#0b5cb5;letter-spacing:0.76px;">Loading Time</span></div><div style="position:absolute;left:472.6px;top:0px;width:2.0px;height:57px;background:#c3c8dc"></div><div style="position:absolute;left:569.8px;top:0px;width:2.0px;height:57px;background:#c3c8dc"></div><div style="position:absolute;left:663.9px;top:0px;width:2.0px;height:57px;background:#c3c8dc"></div><span style="position:absolute;white-space:nowrap;left:402.9px;top:11.3px;font-size:28.5px;line-height:37px;color:#1c2b34;letter-spacing:-0.23px;transform:scaleX(0.8640);transform-origin:0 50%;">LCP</span><span style="position:absolute;white-space:nowrap;left:498.8px;top:11.3px;font-size:28.5px;line-height:37px;color:#1c2b34;letter-spacing:-0.23px;transform:scaleX(0.8401);transform-origin:0 50%;">FCP</span><span style="position:absolute;white-space:nowrap;left:593.8px;top:11.3px;font-size:28.5px;line-height:37px;color:#1c2b34;letter-spacing:-0.23px;transform:scaleX(0.8585);transform-origin:0 50%;">CLS</span><span style="position:absolute;white-space:nowrap;left:688.5px;top:11.3px;font-size:28.5px;line-height:37px;color:#1c2b34;letter-spacing:-0.23px;transform:scaleX(0.9916);transform-origin:0 50%;">INP</span></div>
<span style="position:absolute;white-space:nowrap;left:2803.8px;top:688.9px;font-size:26px;line-height:34px;color:#1c2b34;font-weight:700;letter-spacing:0.29px;">147.19k views</span><div style="position:absolute;left:528px;top:727px;width:1494px;height:385px;background:#fa9d05"></div>
<div style="position:absolute;left:535.8px;top:761px;width:1478.7px;height:342px;background:#f8890a"></div>
<span style="position:absolute;white-space:nowrap;left:538.0px;top:730.8px;font-size:22.1px;line-height:29px;color:#3b4540;letter-spacing:0.73px;">performance: Needs improvement</span>
<span style="position:absolute;white-space:nowrap;left:1890.7px;top:731.2px;font-size:21.5px;line-height:28px;color:#3b4540;font-weight:700;letter-spacing:0.32px;">89.5k views</span>
<div style="position:absolute;left:537.8px;top:763px;width:309.9000000000001px;height:338px;background:#ffcc5e"></div><span style="position:absolute;white-space:nowrap;left:653.8px;top:883.4px;font-size:36.1px;line-height:47px;color:#3b4540;letter-spacing:1.95px;">/cart</span><span style="position:absolute;white-space:nowrap;left:570.5px;top:929.5px;font-size:40px;line-height:52px;color:#3b4540;font-weight:700;letter-spacing:0.19px;">18.86k views</span>
<div style="position:absolute;left:849.7px;top:763px;width:302.79999999999995px;height:338px;background:#ffcc5e"></div><span style="position:absolute;white-space:nowrap;left:996.4px;top:884.9px;font-size:34px;line-height:44px;color:#3b4540;">/</span><span style="position:absolute;white-space:nowrap;left:878.9px;top:929.5px;font-size:40px;line-height:52px;color:#3b4540;font-weight:700;letter-spacing:0.19px;">18.63k views</span>
<div style="position:absolute;left:1154.5px;top:763px;width:529.0px;height:173.79999999999995px;background:#ffcc5e"></div><span style="position:absolute;white-space:nowrap;left:1243.0px;top:817.3px;font-size:24.8px;line-height:32px;color:#3b4540;letter-spacing:0.82px;">/department/lighting/product/?</span><span style="position:absolute;white-space:nowrap;left:1337.0px;top:849.3px;font-size:26px;line-height:34px;color:#3b4540;font-weight:700;letter-spacing:0.59px;">16.49k views</span>
<div style="position:absolute;left:1154.5px;top:938.8px;width:529.0px;height:162.20000000000005px;background:#ffcc5e"></div><span style="position:absolute;white-space:nowrap;left:1237.0px;top:971.4px;font-size:37.1px;line-height:48px;color:#3b4540;letter-spacing:1.31px;">/department/bedding</span><span style="position:absolute;white-space:nowrap;left:1296.0px;top:1017.5px;font-size:40px;line-height:52px;color:#3b4540;font-weight:700;letter-spacing:0.33px;">15.51k views</span>
<div style="position:absolute;left:1685.5px;top:763px;width:327.0px;height:259.4px;background:#ffcc5e"></div><span style="position:absolute;white-space:nowrap;left:1695.5px;top:850.3px;font-size:23.0px;line-height:30px;color:#3b4540;letter-spacing:0.77px;">/department/bedding/produc</span><span style="position:absolute;white-space:nowrap;left:1836.5px;top:878.8px;font-size:22.5px;line-height:29px;color:#3b4540;">t/?</span><span style="position:absolute;white-space:nowrap;left:1780.5px;top:907.8px;font-size:22.5px;line-height:29px;color:#3b4540;font-weight:700;letter-spacing:0.06px;">15.36k views</span>
<div style="position:absolute;left:1685.5px;top:1024.4px;width:327.0px;height:76.59999999999991px;background:#ffcc5e"></div><span style="position:absolute;white-space:nowrap;left:1794.0px;top:1030.8px;font-size:24.2px;line-height:31px;color:#3b4540;letter-spacing:0.80px;">/checkout</span><span style="position:absolute;white-space:nowrap;left:1774.5px;top:1063.3px;font-size:26px;line-height:34px;color:#3b4540;font-weight:700;letter-spacing:0.59px;">4.65k views</span>
<div style="position:absolute;left:2026px;top:727px;width:641px;height:385px;background:#41c464"></div>
<div style="position:absolute;left:2036.6px;top:761.3px;width:619.7000000000003px;height:342.5px;background:#3bb85d"></div>
<span style="position:absolute;white-space:nowrap;left:2034.5px;top:730.8px;font-size:22px;line-height:29px;color:#234a3c;letter-spacing:0.72px;">performance: Good</span>
<span style="position:absolute;white-space:nowrap;left:2523.7px;top:731.2px;font-size:21.5px;line-height:28px;color:#234a3c;font-weight:700;letter-spacing:0.29px;">38.37k views</span>
<div style="position:absolute;left:2038.6px;top:763.3px;width:385.3000000000002px;height:169.4000000000001px;background:#98dea3"></div><span style="position:absolute;white-space:nowrap;left:2068.2px;top:800.4px;font-size:37px;line-height:48px;color:#2c4843;letter-spacing:1.16px;">/department/chairs</span><span style="position:absolute;white-space:nowrap;left:2119.8px;top:844.0px;font-size:42px;line-height:55px;color:#2c4843;font-weight:700;letter-spacing:-0.34px;transform:scaleX(0.9787);transform-origin:0 50%;">12.1k views</span>
<div style="position:absolute;left:2038.6px;top:934.7px;width:385.3000000000002px;height:167.0999999999999px;background:#98dea3"></div><span style="position:absolute;white-space:nowrap;left:2064.8px;top:986.3px;font-size:24.4px;line-height:32px;color:#2c4843;letter-spacing:0.83px;">/department/chairs/product/?</span><span style="position:absolute;white-space:nowrap;left:2149.2px;top:1018.3px;font-size:26px;line-height:34px;color:#2c4843;font-weight:700;letter-spacing:0.72px;">11.94k views</span>
<div style="position:absolute;left:2425.9px;top:763.3px;width:228.4000000000001px;height:142.5px;background:#98dea3"></div><span style="position:absolute;white-space:nowrap;left:2443.1px;top:806.3px;font-size:22.7px;line-height:30px;color:#2c4843;letter-spacing:0.77px;">/department/sofas</span><span style="position:absolute;white-space:nowrap;left:2477.6px;top:834.8px;font-size:22px;line-height:29px;color:#2c4843;font-weight:700;letter-spacing:0.39px;">6.13k views</span>
<div style="position:absolute;left:2425.9px;top:907.8px;width:228.4000000000001px;height:143.70000000000005px;background:#98dea3"></div><span style="position:absolute;white-space:nowrap;left:2439.6px;top:937.3px;font-size:22.7px;line-height:30px;color:#2c4843;letter-spacing:0.76px;">/department/sofas/</span><span style="position:absolute;white-space:nowrap;left:2490.6px;top:966.8px;font-size:22.3px;line-height:29px;color:#2c4843;letter-spacing:0.75px;">product/?</span><span style="position:absolute;white-space:nowrap;left:2477.6px;top:995.8px;font-size:22px;line-height:29px;color:#2c4843;font-weight:700;letter-spacing:0.51px;">6.11k views</span>
<div style="position:absolute;left:2425.9px;top:1053.5px;width:220.5px;height:48.299999999999955px;background:#98dea3"></div>
<div style="position:absolute;left:2648.4px;top:1053.5px;width:5.900000000000091px;height:48.299999999999955px;background:#98dea3"></div>
<span style="position:absolute;white-space:nowrap;left:2435.0px;top:1064.8px;font-size:22.6px;line-height:29px;color:#2c4843;letter-spacing:0.77px;">/department/tabl...</span>
<div style="position:absolute;left:2672px;top:727px;width:316px;height:385px;background:#f86b79"></div>
<div style="position:absolute;left:2677.5px;top:761.3px;width:304.0999999999999px;height:342.20000000000005px;background:#ef4a60"></div>
<div style="position:absolute;left:2680px;top:763.8px;width:299.0999999999999px;height:337.20000000000005px;background:#fb9ea9"></div>
<span style="position:absolute;white-space:nowrap;left:2680.0px;top:730.8px;font-size:22px;line-height:29px;color:#4a3a44;letter-spacing:0.73px;">performance: Poor</span>
<span style="position:absolute;white-space:nowrap;left:2711.5px;top:899.3px;font-size:25.0px;line-height:32px;color:#3f3944;letter-spacing:0.86px;">/department/lighting</span>
<span style="position:absolute;white-space:nowrap;left:2747.5px;top:931.3px;font-size:26px;line-height:34px;color:#3f3944;font-weight:700;letter-spacing:0.59px;">19.31k views</span>
<div style="position:absolute;left:528px;top:1165px;width:20px;height:20px;background:#f79aa5;border-radius:4px"></div>
<span style="position:absolute;white-space:nowrap;left:557.0px;top:1158.3px;font-size:26px;line-height:34px;color:#2c3a41;letter-spacing:0.36px;">Poor &gt;4s</span>
<div style="position:absolute;left:700.7px;top:1165px;width:20.0px;height:20px;background:#fdcb66;border-radius:4px"></div>
<span style="position:absolute;white-space:nowrap;left:729.5px;top:1158.3px;font-size:26px;line-height:34px;color:#2c3a41;letter-spacing:0.91px;">Needs improvement &lt;=4s</span>
<div style="position:absolute;left:1082px;top:1165px;width:20px;height:20px;background:#98dea3;border-radius:4px"></div>
<span style="position:absolute;white-space:nowrap;left:1110.6px;top:1158.3px;font-size:26px;line-height:34px;color:#2c3a41;letter-spacing:0.34px;">Good &lt;=2.5s</span><div style="position:absolute;left:528px;top:1248px;width:2461px;height:312px;border:2px solid #e4e6ee;border-radius:9px"></div>
<div style="position:absolute;left:1116px;top:1250px;width:5px;height:290px;background:#dfe2ec"></div>
<span style="position:absolute;white-space:nowrap;left:645.7px;top:1370.1px;font-size:49px;line-height:64px;color:#1c2b34;font-weight:700;letter-spacing:-0.39px;transform:scaleX(0.9919);transform-origin:0 50%;">147K</span>
<span style="position:absolute;white-space:nowrap;left:770.5px;top:1378.5px;font-size:40px;line-height:52px;color:#5c6873;letter-spacing:0.84px;">total views</span>
<div style="position:absolute;left:620px;top:1457px;width:128px;height:43px;background:#fbe6e9;border-radius:9px"><span style="position:absolute;white-space:nowrap;left:12.5px;top:6.8px;font-size:24px;line-height:31px;color:#c1213a;font-weight:700;letter-spacing:0.52px;">377%</span><svg class="abs" style="left:85px;top:9px" width="25" height="25" viewBox="0 0 24 24" fill="none" stroke="#c1213a" stroke-width="3"><path d="M2 2L21 21"/><path d="M22 4V22H4"/></svg></div>
<span style="position:absolute;white-space:nowrap;left:766.8px;top:1462.8px;font-size:25px;line-height:32px;color:#5c6873;letter-spacing:0.34px;">from previous week</span>
<span style="position:absolute;white-space:nowrap;left:1164.0px;top:1266.3px;font-size:29.5px;line-height:38px;color:#1c2b34;letter-spacing:-0.03px;">Current vs. Previous</span>
<div style="position:absolute;left:1439px;top:1266px;width:54px;height:40px;background:#e2e5ed;border-radius:8px"><span style="position:absolute;white-space:nowrap;left:9.1px;top:2.3px;font-size:28px;line-height:36px;color:#5f6a74;">1w</span></div>
<span style="position:absolute;white-space:nowrap;left:1223.2px;top:1362.3px;font-size:23px;line-height:30px;color:#1c2b34;">1k</span>
<span style="position:absolute;white-space:nowrap;left:1204.0px;top:1455.3px;font-size:23px;line-height:30px;color:#1c2b34;">0.5k</span>
<span class="abs" style="left:1176px;top:1473px;width:0;height:0"><span style="position:absolute;white-space:nowrap;transform:translate(-50%,-50%) rotate(-90deg);font-size:22px;color:#8a9096;line-height:26px">Views</span></span>
<svg class="abs" style="left:0;top:0" width="3020" height="1526" viewBox="0 0 3020 1526" fill="none"><path d="M1254 1377H2976M1254 1470H2976" stroke="#e9e9ec" stroke-width="2"/><path d="M1254.3 1400.7L1265.0 1405.0L1276.6 1400.7L1286.8 1403.4L1296.8 1398.4L1306.1 1400.2L1315.9 1398.4L1327.5 1402.0L1337.9 1403.9L1347.1 1400.2L1357.5 1408.6L1367.7 1395.4L1377.5 1397.9L1388.2 1400.2L1398.9 1399.3L1408.8 1397.5L1418.6 1398.4L1429.6 1405.0L1440.9 1397.5L1450.7 1405.5L1460.5 1401.4L1470.4 1401.4L1481.1 1404.3L1490.9 1400.2L1501.1 1398.4L1511.4 1401.4L1521.6 1404.6L1532.0 1402.0L1542.1 1404.3L1552.5 1400.2L1562.9 1404.3L1573.0 1397.1L1583.2 1402.9L1593.2 1404.6L1603.4 1400.2L1613.8 1404.3L1624.3 1395.4L1634.6 1404.3L1645.0 1398.4L1655.2 1402.9L1665.5 1401.4L1675.7 1401.4L1686.1 1398.9L1696.2 1404.6L1706.1 1403.8L1716.4 1396.1L1726.6 1406.8L1736.8 1406.1L1747.1 1398.4L1757.5 1409.6L1767.7 1400.7L1777.9 1406.1L1788.2 1411.8L1798.9 1399.3L1808.8 1398.9L1818.9 1405.5L1829.3 1398.4L1840.0 1402.9L1850.4 1398.4L1860.5 1397.9L1870.7 1401.4L1881.1 1399.3L1891.4 1399.6L1901.6 1402.5L1912.0 1396.1L1922.1 1395.4L1932.5 1397.1L1942.1 1390.0L1952.5 1402.0L1962.9 1402.0L1973.0 1399.3L1983.2 1402.5L1993.6 1398.4L2003.8 1402.5L2014.1 1400.7L2023.9 1395.7L2033.8 1388.6L2044.5 1402.9L2054.6 1395.4L2065.0 1405.0L2075.4 1398.4L2085.5 1405.5L2095.9 1393.9L2106.1 1397.1L2116.4 1395.7L2126.6 1393.6L2136.4 1401.4L2147.1 1397.9L2157.0 1393.0L2166.8 1393.6L2177.1 1396.6L2187.3 1394.3L2197.5 1398.4L2207.9 1400.7L2218.6 1403.2L2229.3 1405.0L2239.1 1406.8L2249.3 1397.9L2259.6 1401.4L2270.0 1402.0L2280.2 1396.6L2290.4 1396.6L2300.7 1403.8L2311.4 1400.2L2321.8 1402.5L2332.0 1397.1L2341.8 1394.8L2352.1 1392.5L2362.3 1393.0L2372.1 1404.3L2382.5 1405.0L2392.7 1395.4L2402.9 1398.4L2413.2 1394.8L2423.6 1389.5L2433.8 1402.9L2443.9 1393.9L2454.3 1394.8L2464.6 1393.0L2474.8 1389.5L2485.0 1397.5L2495.4 1399.6L2505.5 1392.1L2515.9 1405.5L2526.2 1407.9L2536.4 1397.1L2546.8 1398.9L2557.0 1398.9L2568.0 1402.0L2577.9 1401.4L2587.7 1398.9L2597.9 1398.9L2608.2 1393.0L2618.6 1396.6L2629.3 1404.6L2639.5 1399.6L2649.3 1382.9L2659.6 1400.2L2669.8 1402.0L2680.0 1400.7L2690.4 1400.2L2700.7 1402.5L2710.9 1399.6L2721.2 1404.3L2731.4 1401.4L2741.8 1406.8L2752.0 1402.9L2762.1 1399.6L2772.5 1398.9L2782.9 1397.9L2793.0 1397.9L2803.2 1400.7L2813.6 1399.3L2823.9 1399.6L2834.1 1399.6L2844.3 1397.5L2854.6 1394.8L2865.0 1395.4L2875.2 1395.7L2885.4 1400.2L2895.7 1401.1L2905.9 1399.6L2916.2 1396.6L2926.1 1396.6L2936.4 1409.1L2946.6 1401.4L2956.8 1404.3L2967.7 1417.1" stroke="#3298e8" stroke-width="4" stroke-linejoin="round" stroke-linecap="round"/><path d="M1260.5 1402.0h.01M1269.5 1402.9h.01M1277.5 1401.4h.01M1286.8 1402.0h.01M1295.7 1402.5h.01M1304.6 1400.2h.01M1313.2 1398.4h.01M1321.2 1399.6h.01M1329.3 1402.5h.01M1337.9 1401.4h.01M1346.8 1404.3h.01M1354.3 1399.6h.01M1362.3 1398.4h.01M1370.7 1402.0h.01M1378.9 1403.8h.01M1386.8 1400.7h.01M1395.0 1403.8h.01M1401.6 1404.3h.01M1409.6 1399.3h.01M1418.2 1398.4h.01M1426.6 1402.5h.01M1433.8 1401.4h.01M1441.4 1397.1h.01M1449.8 1398.9h.01M1457.9 1402.9h.01M1465.9 1403.8h.01M1474.8 1405.0h.01M1482.9 1405.0h.01M1490.9 1400.7h.01M1498.9 1399.6h.01M1507.0 1403.8h.01M1515.0 1406.4h.01M1523.0 1403.8h.01M1531.1 1399.6h.01M1539.6 1399.6h.01M1548.0 1401.4h.01M1557.0 1398.9h.01M1565.4 1397.9h.01M1573.9 1399.6h.01M1582.5 1400.7h.01M1590.0 1406.1h.01M1596.8 1406.1h.01M1604.3 1401.4h.01M1613.2 1400.7h.01M1621.8 1401.4h.01M1630.2 1398.9h.01M1639.1 1397.5h.01M1646.8 1397.1h.01M1654.6 1402.0h.01M1663.2 1398.9h.01M1671.8 1398.4h.01M1679.6 1402.0h.01M1686.1 1406.8h.01M1693.6 1401.4h.01M1701.6 1400.7h.01M1710.5 1401.4h.01M1718.6 1401.4h.01M1727.5 1404.3h.01M1735.0 1408.6h.01M1741.8 1404.6h.01M1748.9 1398.4h.01M1757.0 1402.0h.01M1765.0 1398.9h.01M1773.0 1396.6h.01M1781.4 1395.7h.01M1790.0 1397.1h.01M1798.9 1395.7h.01M1807.0 1398.4h.01M1815.9 1398.9h.01M1824.8 1398.4h.01M1832.9 1398.4h.01M1841.8 1401.4h.01M1850.7 1401.4h.01M1858.8 1398.9h.01M1867.1 1395.4h.01M1875.4 1395.7h.01M1883.8 1396.6h.01M1891.4 1393.9h.01M1897.1 1400.7h.01M1902.9 1403.2h.01M1908.8 1396.6h.01M1914.1 1389.5h.01M1919.5 1382.3h.01M1925.4 1383.2h.01M1931.4 1389.5h.01M1938.2 1395.7h.01M1945.0 1397.9h.01M1953.4 1395.4h.01M1961.8 1397.9h.01M1970.4 1397.1h.01M1978.9 1396.1h.01M1987.3 1396.6h.01M1995.7 1398.9h.01M2003.9 1402.5h.01M2012.3 1397.5h.01M2020.4 1397.1h.01M2028.9 1397.9h.01M2037.3 1399.6h.01M2045.4 1402.9h.01M2053.4 1398.9h.01M2061.8 1397.9h.01M2070.0 1402.0h.01M2076.6 1406.1h.01M2085.5 1402.9h.01M2093.6 1402.5h.01M2102.1 1401.1h.01M2110.5 1397.9h.01M2118.6 1396.6h.01M2127.1 1398.9h.01M2135.5 1401.4h.01M2143.9 1403.2h.01M2151.1 1401.1h.01M2157.5 1394.8h.01M2163.6 1388.6h.01M2170.7 1386.4h.01M2178.4 1388.9h.01M2187.3 1388.2h.01M2194.5 1392.5h.01M2201.6 1393.9h.01M2210.2 1390.7h.01M2218.6 1388.9h.01M2226.2 1393.6h.01M2234.3 1397.1h.01M2242.7 1400.2h.01M2250.7 1402.9h.01M2259.3 1400.7h.01M2267.7 1399.3h.01M2276.1 1402.0h.01M2282.9 1398.9h.01M2287.3 1391.8h.01M2292.7 1388.2h.01M2299.8 1392.5h.01M2307.9 1396.6h.01M2315.9 1400.7h.01M2322.5 1402.9h.01M2329.6 1397.1h.01M2336.8 1397.9h.01M2343.9 1399.6h.01M2350.7 1393.6h.01M2357.9 1397.1h.01M2364.6 1397.9h.01M2371.2 1392.1h.01M2376.1 1396.6h.01M2381.4 1403.8h.01M2388.2 1406.4h.01M2397.1 1405.5h.01M2405.2 1403.8h.01M2411.4 1397.9h.01M2419.5 1397.9h.01M2427.9 1397.5h.01M2435.0 1394.3h.01M2442.1 1399.6h.01M2449.8 1397.5h.01M2457.9 1397.1h.01M2465.4 1402.0h.01M2473.9 1402.5h.01M2482.5 1399.6h.01M2490.9 1398.9h.01M2499.8 1399.6h.01M2508.2 1400.7h.01M2516.8 1400.2h.01M2526.1 1398.4h.01M2534.3 1401.4h.01M2542.7 1398.9h.01M2550.7 1398.4h.01M2558.8 1401.4h.01M2567.5 1402.5h.01M2575.2 1397.1h.01M2582.9 1396.6h.01M2591.2 1398.9h.01M2599.3 1400.7h.01M2607.3 1396.6h.01M2616.2 1395.4h.01M2624.6 1394.8h.01M2633.2 1396.6h.01M2641.2 1399.3h.01M2649.6 1402.0h.01M2658.2 1398.4h.01M2666.8 1399.6h.01M2675.2 1398.4h.01M2682.9 1397.9h.01M2690.0 1402.9h.01M2697.9 1400.7h.01M2705.5 1396.1h.01M2712.7 1393.9h.01M2719.8 1398.9h.01M2727.5 1398.4h.01M2735.0 1399.6h.01M2741.8 1406.1h.01M2750.2 1401.4h.01M2758.2 1402.0h.01M2767.1 1402.9h.01M2775.7 1400.7h.01M2783.6 1397.9h.01M2791.8 1400.7h.01M2800.7 1402.5h.01M2809.1 1402.0h.01M2817.5 1400.2h.01M2826.1 1400.7h.01M2834.6 1402.5h.01M2843.0 1405.5h.01M2852.0 1406.8h.01M2858.6 1402.5h.01M2865.0 1397.1h.01M2873.9 1398.9h.01M2882.3 1400.2h.01M2890.7 1397.9h.01M2898.9 1394.8h.01M2907.3 1393.9h.01M2915.0 1397.9h.01M2923.4 1398.9h.01M2932.3 1398.9h.01M2940.7 1397.9h.01M2949.3 1398.4h.01M2956.4 1403.8h.01M2963.2 1400.7h.01" stroke="#55585f" stroke-width="4.200" stroke-linecap="round" stroke-linejoin="round"/></svg></main>
<div class="abs" style="left:110px;top:1450px;width:2910px;height:76px;background:linear-gradient(180deg,rgba(120,120,120,0) 0%,rgba(120,120,120,0.035) 35%,rgba(120,120,120,0.10) 70%,rgba(120,120,120,0.19) 100%);pointer-events:none"></div>
<svg class="abs" style="left:0;top:1510px" width="16" height="16" viewBox="0 0 16 16"><path d="M0 0A16 16 0 0 0 16 16H0Z" fill="#0a120a"/></svg>
<svg class="abs" style="left:3009px;top:1515px" width="11" height="11" viewBox="0 0 11 11"><path d="M11 0A11 11 0 0 1 0 11H11Z" fill="#0a0a0a"/></svg>
</body>
</html>
